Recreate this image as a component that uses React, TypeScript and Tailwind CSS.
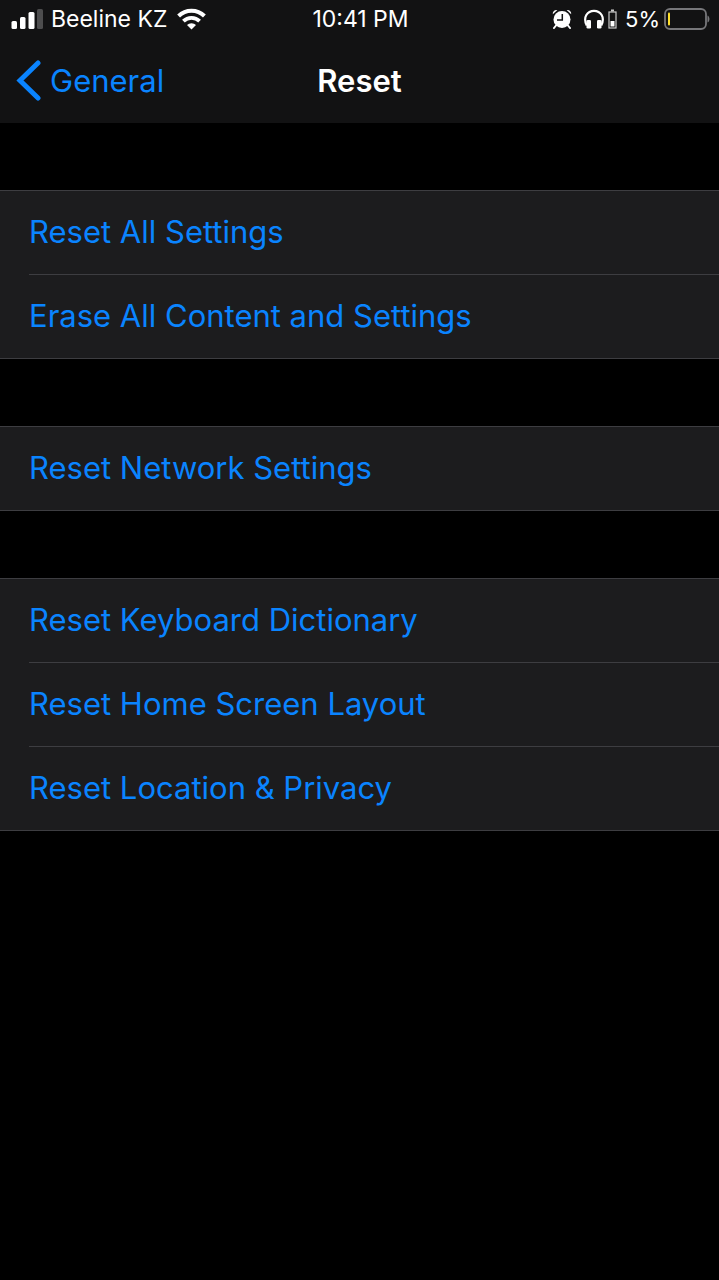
import { ReactNode } from "react";

const groups = [
  ["Reset All Settings", "Erase All Content and Settings"],
  ["Reset Network Settings"],
  [
    "Reset Keyboard Dictionary",
    "Reset Home Screen Layout",
    "Reset Location & Privacy",
  ],
];

function SignalIcon() {
  return (
    <svg width="32" height="20" viewBox="0 0 32 20" fill="#fff">
      <rect x="0.500" y="12" width="5.500" height="8" rx="1.500" />
      <rect x="9" y="8" width="5.500" height="12" rx="1.500" />
      <rect x="17.500" y="3" width="6" height="17" rx="1.500" />
      <rect x="26" y="0" width="6" height="20" rx="1.500" opacity="0.25" />
    </svg>
  );
}

function WifiIcon() {
  return (
    <svg width="29" height="22" viewBox="0 0 29 22" fill="none" stroke="#fff">
      <path d="M1.600 8a18.300 18.300 0 0 1 25.800 0" strokeWidth="4" />
      <path d="M6.400 13.200a11.500 11.500 0 0 1 16.200 0" strokeWidth="3.800" />
      <path d="M14.500 21.500L10 17.100a6.400 6.400 0 0 1 9 0z" fill="#fff" stroke="none" />
    </svg>
  );
}

function AlarmIcon() {
  return (
    <svg width="20" height="20" viewBox="0 0 20 20" fill="none" stroke="#fff">
      <circle cx="10" cy="10.500" r="8.500" fill="#fff" stroke="none" />
      <path d="M0.800 5.200C0.500 2.500 2.500 0.600 5.400 1zM19.200 5.200C19.500 2.500 17.500 0.600 14.600 1z" fill="#fff" stroke="none" />
      <path d="M4 16.500l-2 2.500M16 16.500l2 2.500" strokeWidth="2" strokeLinecap="round" />
      <path d="M5 11h5.300V5" stroke="#121213" strokeWidth="1.500" />
    </svg>
  );
}

function HeadphonesIcon() {
  return (
    <svg width="20" height="20" viewBox="0 0 20 20" fill="none" stroke="#fff">
      <path d="M2.800 16.500C-1.500 8 3.500 1.800 10 1.800s11.500 6.200 7.200 14.700" strokeWidth="2.200" />
      <rect x="2.500" y="11" width="4.500" height="8.500" rx="1.300" fill="#fff" stroke="none" />
      <rect x="13" y="11" width="4.500" height="8.500" rx="1.300" fill="#fff" stroke="none" />
    </svg>
  );
}

function HeadphonesBatteryIcon() {
  return (
    <svg width="9" height="20" viewBox="0 0 9 20" fill="none">
      <path d="M3 1.500h3" stroke="#ccc" strokeWidth="2" />
      <rect x="1" y="3" width="7" height="16" stroke="#ccc" strokeWidth="1.200" />
      <rect x="2.500" y="12" width="4" height="5.500" fill="#fff" />
    </svg>
  );
}

function BatteryIcon() {
  return (
    <svg width="46" height="22" viewBox="0 0 46 22" fill="none">
      <rect x="1" y="1" width="41" height="20" rx="5" stroke="#77777a" strokeWidth="1.800" />
      <rect x="4" y="4.500" width="2" height="13" rx="1" fill="#ffe02e" />
      <path d="M43.500 7.500c2.600 1 2.600 6 0 7z" fill="#77777a" />
    </svg>
  );
}

function StatusBar() {
  return (
    <div className="grid h-[38px] grid-cols-3 items-center pl-[11px] pr-[9px] text-[23px] text-white">
      <div className="flex items-center gap-2 whitespace-nowrap">
        <SignalIcon />
        <span>Beeline KZ</span>
        <span className="pl-0.5">
          <WifiIcon />
        </span>
      </div>
      <time className="text-center">10:41 PM</time>
      <div className="flex items-center justify-end gap-1">
        <AlarmIcon />
        <span className="pl-2">
          <HeadphonesIcon />
        </span>
        <HeadphonesBatteryIcon />
        <span className="pl-1 text-[22px]">5%</span>
        <BatteryIcon />
      </div>
    </div>
  );
}

function Group({ children }: { children: ReactNode }) {
  return (
    <ul className="border-y border-[#3d3d41] bg-[#1c1c1e]">{children}</ul>
  );
}

export default function App() {
  return (
    <div className="min-h-screen bg-black font-['Inter',sans-serif]">
      <header className="bg-[#121213]">
        <StatusBar />
        <nav className="grid h-[85px] grid-cols-3 items-center px-4 pt-px text-[31px]">
          <a href="#general" className="flex items-center gap-2 text-[#0a84ff]">
            <svg width="26" height="42" viewBox="0 0 26 42" fill="none">
              <path
                d="M22 3L4 20.500l18 17.500"
                stroke="#0a84ff"
                strokeWidth="5"
                strokeLinecap="round"
              />
            </svg>
            General
          </a>
          <h1 className="text-center font-semibold text-white">Reset</h1>
        </nav>
      </header>
      <main className="flex flex-col gap-[67px] pt-[67px]">
        {groups.map((items) => (
          <Group key={items[0]}>
            {items.map((label) => (
              <li key={label} className="group pl-[29px]">
                <button className="h-[84px] w-full border-b border-[#3d3d41] text-left text-[31px] text-[#0a84ff] group-last:h-[83px] group-last:border-0">
                  {label}
                </button>
              </li>
            ))}
          </Group>
        ))}
      </main>
    </div>
  );
}
